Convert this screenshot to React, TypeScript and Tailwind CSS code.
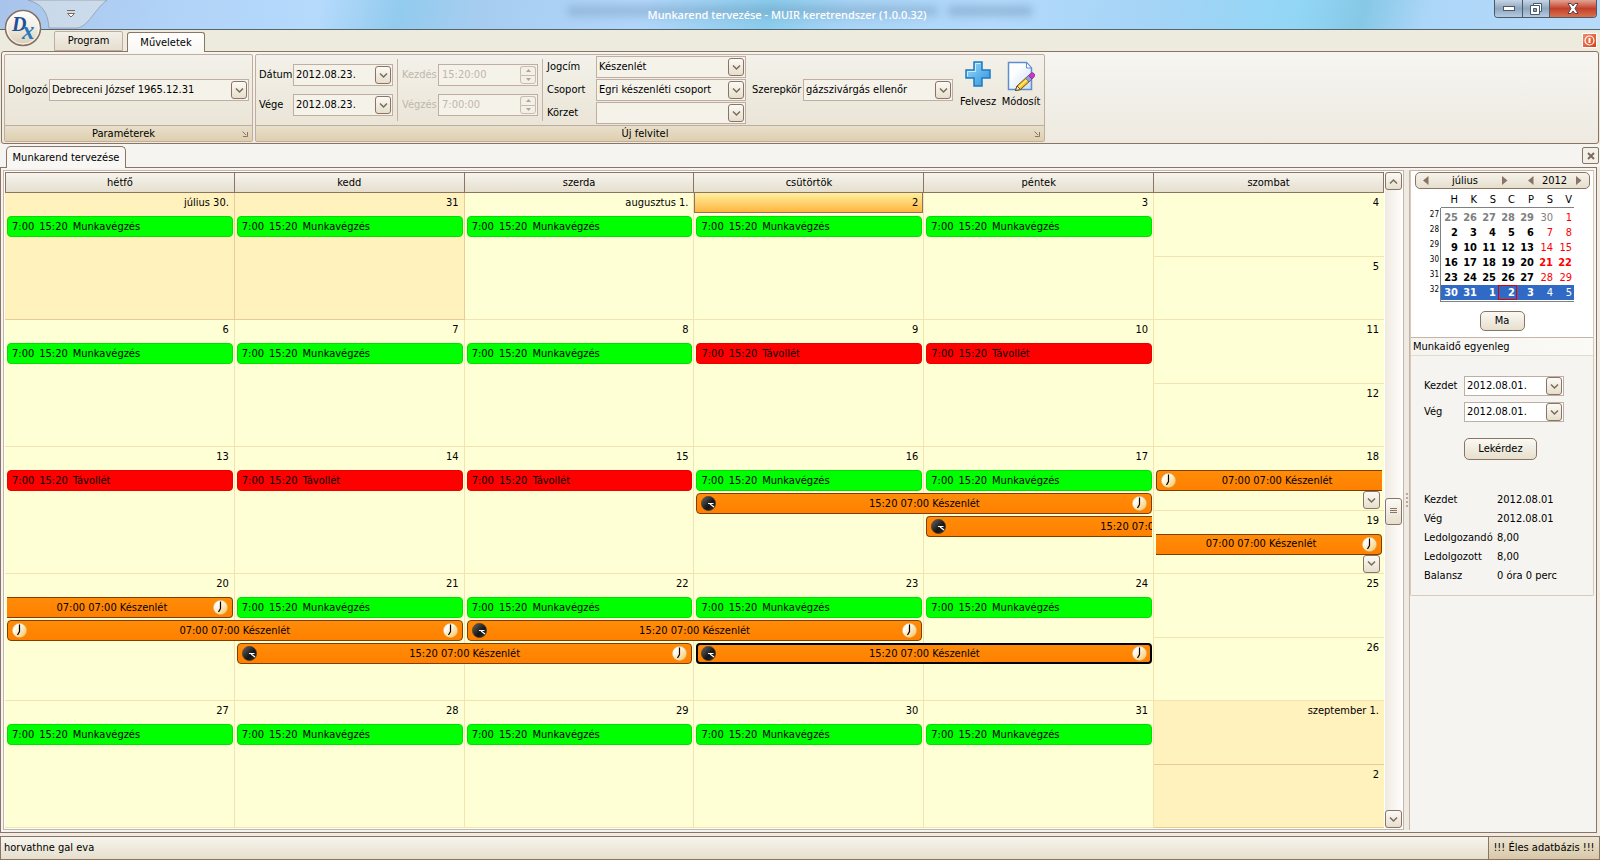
import type { ReactNode } from "react";
import clsx from "clsx";

type EventKind = "work" | "absence" | "duty";

type CalEvent = {
  kind: EventKind;
  place: string;
  start?: "day" | "night";
  end?: "day" | "night";
  openLeft?: boolean;
  openRight?: boolean;
  cut?: boolean;
  selected?: boolean;
  text: string;
};

type WeekendDay = { label: string; other?: boolean; event?: CalEvent };

type Week = {
  days: { label: string; other?: boolean; today?: boolean }[];
  weekend: WeekendDay[];
  events: CalEvent[];
};

const dayNames = ["hétfő", "kedd", "szerda", "csütörtök", "péntek", "szombat"];

const cols = [
  "col-start-1 row-start-2",
  "col-start-2 row-start-2",
  "col-start-3 row-start-2",
  "col-start-4 row-start-2",
  "col-start-5 row-start-2",
];

const work = (i: number): CalEvent => ({ kind: "work", place: cols[i], text: "Munkavégzés" });
const absence = (i: number): CalEvent => ({ kind: "absence", place: cols[i], text: "Távollét" });

const weeks: Week[] = [
  {
    days: [
      { label: "július 30.", other: true },
      { label: "31", other: true },
      { label: "augusztus 1." },
      { label: "2", today: true },
      { label: "3" },
    ],
    weekend: [{ label: "4" }, { label: "5" }],
    events: [work(0), work(1), work(2), work(3), work(4)],
  },
  {
    days: [{ label: "6" }, { label: "7" }, { label: "8" }, { label: "9" }, { label: "10" }],
    weekend: [{ label: "11" }, { label: "12" }],
    events: [work(0), work(1), work(2), absence(3), absence(4)],
  },
  {
    days: [{ label: "13" }, { label: "14" }, { label: "15" }, { label: "16" }, { label: "17" }],
    weekend: [
      { label: "18", event: { kind: "duty", place: "", start: "day", openRight: true, text: "07:00 07:00 Készenlét" } },
      { label: "19", event: { kind: "duty", place: "", end: "day", openLeft: true, text: "07:00 07:00 Készenlét" } },
    ],
    events: [
      absence(0),
      absence(1),
      absence(2),
      work(3),
      work(4),
      { kind: "duty", place: "col-start-4 col-span-2 row-start-3", start: "night", end: "day", text: "15:20 07:00 Készenlét" },
      { kind: "duty", place: "col-start-5 row-start-4", start: "night", openRight: true, cut: true, text: "15:20 07:00 Készenlét" },
    ],
  },
  {
    days: [{ label: "20" }, { label: "21" }, { label: "22" }, { label: "23" }, { label: "24" }],
    weekend: [{ label: "25" }, { label: "26" }],
    events: [
      { kind: "duty", place: "col-start-1 row-start-2", end: "day", openLeft: true, text: "07:00 07:00 Készenlét" },
      work(1),
      work(2),
      work(3),
      work(4),
      { kind: "duty", place: "col-start-1 col-span-2 row-start-3", start: "day", end: "day", text: "07:00 07:00 Készenlét" },
      { kind: "duty", place: "col-start-3 col-span-2 row-start-3", start: "night", end: "day", text: "15:20 07:00 Készenlét" },
      { kind: "duty", place: "col-start-2 col-span-2 row-start-4", start: "night", end: "day", text: "15:20 07:00 Készenlét" },
      { kind: "duty", place: "col-start-4 col-span-2 row-start-4", start: "night", end: "day", selected: true, text: "15:20 07:00 Készenlét" },
    ],
  },
  {
    days: [{ label: "27" }, { label: "28" }, { label: "29" }, { label: "30" }, { label: "31" }],
    weekend: [
      { label: "szeptember 1.", other: true },
      { label: "2", other: true },
    ],
    events: [work(0), work(1), work(2), work(3), work(4)],
  },
];

const miniWeeks = [
  { no: 27, days: [25, 26, 27, 28, 29, 30, 1] },
  { no: 28, days: [2, 3, 4, 5, 6, 7, 8] },
  { no: 29, days: [9, 10, 11, 12, 13, 14, 15] },
  { no: 30, days: [16, 17, 18, 19, 20, 21, 22] },
  { no: 31, days: [23, 24, 25, 26, 27, 28, 29] },
  { no: 32, days: [30, 31, 1, 2, 3, 4, 5] },
];

const balance = [
  ["Kezdet", "2012.08.01"],
  ["Vég", "2012.08.01"],
  ["Ledolgozandó", "8,00"],
  ["Ledolgozott", "8,00"],
  ["Balansz", "0 óra 0 perc"],
];

/* ── Icons ── */

function Chevron({ up }: { up?: boolean }) {
  return (
    <svg width="9" height="7" viewBox="0 0 9 7" fill="none" stroke="#7d6a5c" strokeWidth="1.5">
      <path d={up ? "M1 5.5 4.5 2 8 5.5" : "M1 1.5 4.5 5 8 1.5"} />
    </svg>
  );
}

function Triangle({ left }: { left?: boolean }) {
  return (
    <svg width="6" height="9" viewBox="0 0 6 9" fill="#8c7464">
      <path d={left ? "M5.5 0v9L0 4.500z" : "M0 0v9l5.500-4.500z"} />
    </svg>
  );
}

function Clock({ night }: { night?: boolean }) {
  return (
    <svg className="shrink-0" width="15" height="15" viewBox="0 0 15 15">
      <defs>
        <linearGradient id="clockDay" x1="0" y1="0" x2="1" y2="1">
          <stop offset="0.3" stopColor="#fffdf4" />
          <stop offset="1" stopColor="#f8c050" />
        </linearGradient>
        <linearGradient id="clockNight" x1="0" y1="0" x2="1" y2="1">
          <stop offset="0" stopColor="#6a6a6a" />
          <stop offset="0.6" stopColor="#141414" />
          <stop offset="1" stopColor="#3c3c3c" />
        </linearGradient>
      </defs>
      <circle cx="7.500" cy="7.500" r="7.200" fill={night ? "url(#clockNight)" : "url(#clockDay)"} stroke={night ? "#4a4038" : "#d9a04c"} strokeWidth="0.500" />
      {night ? (
        <path d="M7 7.500h5.500M9 8l4 3" stroke="#fff" strokeWidth="1.200" fill="none" />
      ) : (
        <path d="M7.500 1.500v7L5.500 12" stroke="#000" strokeWidth="1.200" fill="none" />
      )}
    </svg>
  );
}

function PlusIcon() {
  return (
    <svg width="26" height="26" viewBox="0 0 26 26">
      <defs>
        <linearGradient id="plusFill" x1="0" y1="0" x2="1" y2="1">
          <stop offset="0" stopColor="#9edcf8" />
          <stop offset="1" stopColor="#2a93e0" />
        </linearGradient>
      </defs>
      <path d="M9 1h8v8h8v8h-8v8H9v-8H1V9h8z" fill="url(#plusFill)" stroke="#2079c4" strokeWidth="1.500" />
      <path d="M10.500 2.500h5M10.500 2.500v8h-8v5" fill="none" stroke="#c8edfc" />
    </svg>
  );
}

function EditIcon() {
  return (
    <svg width="28" height="31" viewBox="0 0 28 31">
      <defs>
        <linearGradient id="pageFill" x1="0" y1="0" x2="1" y2="1">
          <stop offset="0.3" stopColor="#ffffff" />
          <stop offset="1" stopColor="#c9dbf4" />
        </linearGradient>
      </defs>
      <path d="M1.500 1.500h18l5 5.500v21.500h-23z" fill="url(#pageFill)" stroke="#5b8fd0" strokeWidth="1.500" />
      <path d="M19.500 1.500V7h5z" fill="#fff" stroke="#5b8fd0" />
      <path d="M8.500 29.500 10 25l11-10 3.500 3.500-11 10z" fill="#f9c11c" stroke="#6a5510" />
      <path d="M11.500 26.500 22 17" stroke="#fff0a0" strokeWidth="1.200" />
      <path d="m8.500 29.500 1.500-4.500 3.500 3.500z" fill="#fbe6c0" stroke="#4a3a18" strokeWidth="0.800" />
      <path d="m18.500 17.500 3-3 3.500 3.500-3 3z" fill="#9a9ad2" stroke="#5a5a90" strokeWidth="0.700" />
      <path d="m21.500 14.500 2-2a2 2 0 0 1 3.500 3.500l-2 2z" fill="#c23ad0" stroke="#7c1c88" strokeWidth="0.700" />
    </svg>
  );
}

function AppOrb() {
  return (
    <svg width="38" height="38" viewBox="0 0 38 38">
      <defs>
        <linearGradient id="orb" x1="0" y1="0" x2="0" y2="1">
          <stop offset="0" stopColor="#ffffff" />
          <stop offset="0.5" stopColor="#f1ece0" />
          <stop offset="1" stopColor="#d8cbb4" />
        </linearGradient>
      </defs>
      <circle cx="19" cy="19" r="17.500" fill="url(#orb)" stroke="#857062" strokeWidth="1.500" />
      <circle cx="19" cy="19" r="16" fill="none" stroke="#fff" strokeWidth="0.800" />
      <text x="8" y="22" fontFamily="Liberation Serif, serif" fontStyle="italic" fontWeight="bold" fontSize="20" fill="#1f4f96">
        D
      </text>
      <text x="18" y="30" fontFamily="Liberation Serif, serif" fontStyle="italic" fontWeight="bold" fontSize="25" fill="#2878be">
        x
      </text>
    </svg>
  );
}

/* ── Fields ── */

const arrowBox =
  "flex items-center justify-center w-4 h-[18px] rounded-[3px] border border-[#8c7464] bg-gradient-to-b from-[#fbfaf6] to-[#e6dfcd]";

function Combo({ id, value, className }: { id: string; value: string; className: string }) {
  return (
    <div className={clsx("grid items-center h-[22px] border border-[#beaea4] bg-[#f5f2ea]", className)}>
      <select id={id} defaultValue={value} className="col-start-1 row-start-1 w-full h-5 pl-[2px] appearance-none bg-transparent outline-none">
        <option>{value}</option>
      </select>
      <span className={clsx(arrowBox, "col-start-1 row-start-1 justify-self-end mr-px pointer-events-none")}>
        <Chevron />
      </span>
    </div>
  );
}

function DateField({ id, value, plain }: { id: string; value: string; plain?: boolean }) {
  return (
    <div className={clsx("flex items-center w-[100px] border border-[#beaea4]", plain ? "h-5 bg-white" : "h-[22px] bg-[#f5f2ea]")}>
      <input id={id} defaultValue={value} className="flex-1 min-w-0 pl-[2px] bg-transparent outline-none" />
      <button aria-label="Naptár" className={clsx(arrowBox, "mr-px", plain && "h-4")}>
        <Chevron />
      </button>
    </div>
  );
}

function TimeField({ id, value }: { id: string; value: string }) {
  const half = "flex flex-1 items-center justify-center border border-[#c8bcb0] bg-[#f3f0e8]";
  return (
    <div className="flex items-center w-[100px] h-[22px] border border-[#beaea4] bg-[#f5f2ea]">
      <input id={id} disabled defaultValue={value} className="flex-1 min-w-0 pl-[3px] bg-transparent text-[#c0b6ae]" />
      <div className="flex flex-col w-4 h-[18px] mr-px">
        <button disabled aria-label="Növel" className={clsx(half, "rounded-t-[3px] border-b-0")}>
          <svg width="5" height="3" viewBox="0 0 5 3" fill="#b0a398"><path d="M0 3 2.500 0 5 3z" /></svg>
        </button>
        <button disabled aria-label="Csökkent" className={clsx(half, "rounded-b-[3px]")}>
          <svg width="5" height="3" viewBox="0 0 5 3" fill="#b0a398"><path d="M0 0 2.500 3 5 0z" /></svg>
        </button>
      </div>
    </div>
  );
}

function RibbonGroup({ title, children }: { title: string; children: ReactNode }) {
  return (
    <section className="flex flex-col rounded-[2px] border border-[#bfaea0] bg-gradient-to-b from-[#f3f1ea] to-[#e8e2d2]">
      <div className="flex items-center h-[70px] px-[3px]">{children}</div>
      <div className="flex items-center h-4 border-t border-[#bfaea0] bg-gradient-to-b from-[#e8dfcb] to-[#dfcfae] pr-1">
        <h2 className="flex-1 text-center leading-none">{title}</h2>
        <svg width="6" height="6" viewBox="0 0 6 6" fill="none" stroke="#8c7464"><path d="M0.500 0.500 4 4M5.500 1v4.500H1" /></svg>
      </div>
    </section>
  );
}

function Divider() {
  return <span className="w-px h-[62px] mx-1 bg-[#c3b2a4]" />;
}

/* ── Calendar ── */

function EventBar({ event }: { event: CalEvent }) {
  const { kind, place, start, end, openLeft, openRight, cut, selected, text } = event;
  if (kind !== "duty") {
    return (
      <div
        className={clsx(
          "z-10 flex items-center gap-[5px] h-[21px] mx-[2px] pl-1 rounded-[4px] border whitespace-nowrap overflow-hidden",
          kind === "work" ? "bg-[#00ff00] border-[#00e000]" : "bg-[#ff0000] border-[#ea0000]",
          place
        )}
      >
        <span>7:00</span>
        <span>15:20</span>
        <span>{text}</span>
      </div>
    );
  }
  return (
    <div
      className={clsx(
        "z-10 flex items-center h-[21px] mx-[2px] bg-gradient-to-b from-[#ff8c08] to-[#ff8000] whitespace-nowrap overflow-hidden",
        selected ? "border-2 border-black px-[3px]" : "border border-[#803f00] px-1",
        openLeft ? "border-l-0" : "rounded-l-[4px]",
        openRight ? "border-r-0" : "rounded-r-[4px]",
        place
      )}
    >
      {start && <Clock night={start === "night"} />}
      <span className={clsx("text-center", cut ? "w-[193%] shrink-0" : "flex-1")}>{text}</span>
      {end && <Clock night={end === "night"} />}
    </div>
  );
}

function WeekRow({ week }: { week: Week }) {
  return (
    <div className="grid grid-cols-6 grid-rows-[23px_23px_23px_23px_1fr]">
      {week.days.map((day, i) => (
        <div
          key={day.label}
          className={clsx(
            "row-start-1 row-span-5 border-r border-b",
            day.other ? "bg-[#fff2bd] border-[#e9cb98]" : "bg-[#ffffd5] border-[#f4e3b2]",
            i === 0 && "col-start-1",
            i === 1 && "col-start-2",
            i === 2 && "col-start-3",
            i === 3 && "col-start-4",
            i === 4 && "col-start-5"
          )}
        >
          <div
            className={clsx(
              "flex items-center justify-end h-5",
              day.today
                ? "pr-1 border border-t-0 border-[#8c7464] bg-gradient-to-b from-[#fff09c] to-[#ffb53a]"
                : "pr-[5px]"
            )}
          >
            {day.label}
          </div>
        </div>
      ))}
      <div className="col-start-6 row-start-1 row-span-5 flex flex-col">
        {week.weekend.map((day) => (
          <div
            key={day.label}
            className={clsx(
              "flex flex-1 flex-col border-b",
              day.other ? "bg-[#fff2bd] border-[#e9cb98]" : "bg-[#ffffd5] border-[#f4e3b2]"
            )}
          >
            <div className="flex items-center justify-end h-5 mb-[3px] pr-[5px]">{day.label}</div>
            {day.event && (
              <>
                <EventBar event={day.event} />
                <button aria-label="További események" className={clsx(arrowBox, "h-[17px] w-[17px] self-end mr-1 to-[#d8c8a8]")}>
                  <Chevron />
                </button>
              </>
            )}
          </div>
        ))}
      </div>
      {week.events.map((event) => (
        <EventBar key={event.place} event={event} />
      ))}
    </div>
  );
}

function MiniCalendar() {
  return (
    <div className="flex flex-col items-center bg-white pt-px pb-1.5">
      <div className="flex items-center w-[175px] h-[17px] px-[7px] rounded-[5px] border border-[#8c7464] bg-gradient-to-b from-[#f6f3ec] to-[#e6dfcd]">
        <button aria-label="Előző hónap"><Triangle left /></button>
        <span className="flex-1 text-center">július</span>
        <button aria-label="Következő hónap"><Triangle /></button>
        <button aria-label="Előző év" className="ml-5"><Triangle left /></button>
        <span className="w-[42px] text-center">2012</span>
        <button aria-label="Következő év"><Triangle /></button>
      </div>
      <table className="self-start ml-[11px] mt-[2px] border-separate border-spacing-0 text-right leading-[15px]">
        <thead>
          <tr>
            <th />
            {["H", "K", "S", "C", "P", "S", "V"].map((d, i) => (
              <th key={i} className="w-[19px] h-[17px] p-0 pr-[2px] border-b border-[#808080] font-normal text-right">
                {d}
              </th>
            ))}
          </tr>
        </thead>
        <tbody>
          <tr>
            <th className="h-[2px] p-0 border-r border-[#808080]" />
            <td colSpan={7} className="h-[2px] p-0" />
          </tr>
          {miniWeeks.map((week, row) => (
            <tr key={week.no}>
              <th className="w-[19px] p-0 pr-px border-r border-[#808080] text-[8px] leading-[9px] font-normal align-top text-right">{week.no}</th>
              {week.days.map((day, i) => {
                const weekend = i > 4;
                const busy = !weekend || row === 3;
                return (
                  <td
                    key={i}
                    className={clsx(
                      "w-[19px] h-[15px] p-0 pr-[2px]",
                      busy && "font-bold",
                      row === 5 && "bg-[#316ac5] text-white",
                      row === 5 && i === 3 && "outline outline-1 -outline-offset-1 outline-[#e00000]",
                      row === 0 && i < 6 && "text-[#808080]",
                      weekend && row < 5 && !(row === 0 && i === 5) && "text-[#ff0000]"
                    )}
                  >
                    {day}
                  </td>
                );
              })}
            </tr>
          ))}
          <tr>
            <th className="h-[2px] p-0 border-r border-[#808080]" />
            <td colSpan={7} className="h-[2px] p-0 border-b border-[#808080]" />
          </tr>
        </tbody>
      </table>
      <button className="w-[45px] h-5 mt-[9px] rounded-[5px] border border-[#8c7464] bg-gradient-to-b from-[#faf9f4] to-[#e6dfcd]">Ma</button>
    </div>
  );
}

function SidePanel() {
  return (
    <aside className="w-[184px] shrink-0">
      <div className="border border-t-[#c5b5a8] border-[#d6cbb8] rounded-b-[2px]">
        <MiniCalendar />
        <h2 className="h-[19px] pl-[2px] border-t border-b border-t-[#c5b5a8] border-b-[#e4dccb] bg-gradient-to-r from-[#f5f4f0] to-[#fbfaf7] leading-[17px]">
          Munkaidő egyenleg
        </h2>
        <div className="px-[13px] pt-5 pb-[10px]">
          <div className="grid grid-cols-[40px_100px] items-center gap-y-1.5">
            <label htmlFor="from">Kezdet</label>
            <DateField id="from" value="2012.08.01." plain />
            <label htmlFor="to">Vég</label>
            <DateField id="to" value="2012.08.01." plain />
          </div>
          <button className="block w-[73px] h-[22px] ml-10 mt-4 rounded-[5px] border border-[#8c7464] bg-gradient-to-b from-[#faf9f4] to-[#e6dfcd]">
            Lekérdez
          </button>
          <dl className="grid grid-cols-[73px_1fr] mt-[30px] leading-[19px]">
            {balance.map(([name, value]) => (
              <div key={name} className="contents">
                <dt className="whitespace-nowrap">{name}</dt>
                <dd>{value}</dd>
              </div>
            ))}
          </dl>
        </div>
      </div>
    </aside>
  );
}

function ScrollBar() {
  return (
    <div className="flex flex-col w-[17px] shrink-0 ml-px bg-gradient-to-r from-[#efeae0] to-[#fffefc]">
      <button aria-label="Fel" className={clsx(arrowBox, "w-[17px] h-[17px]")}><Chevron up /></button>
      <span className="grow-[309] basis-0" />
      <span className={clsx(arrowBox, "w-[17px] h-[27px] shrink-0")}>
        <svg width="7" height="7" viewBox="0 0 7 7" stroke="#8c7464"><path d="M0 0.500h7M0 2.500h7M0 4.500h7" /></svg>
      </span>
      <span className="grow-[286] basis-0" />
      <button aria-label="Le" className={clsx(arrowBox, "w-[17px] h-[17px]")}><Chevron /></button>
    </div>
  );
}

function TitleBar() {
  return (
    <header className="relative flex items-center h-[30px] border-b border-[#56646e] bg-[linear-gradient(105deg,#a9c4ea_0%,#b0d2f6_10%,#b5dafc_20%,#92cbee_25%,#a6cdf0_30%,#b2d6fa_40%,#8accec_48%,#a8d4f6_53%,#b4dafc_62%,#a4d4f6_72%,#92d6f6_81%,#86c8e6_85%,#acd6f8_89%,#b8dafa_100%)]">
      <svg className="absolute left-[28px] top-0" width="80" height="29" viewBox="0 0 80 29">
        <path d="M0 0c14 4 20 12 21 28h28C60 27 66 10 79 0z" fill="#dfe4e8" fillOpacity="0.6" stroke="#8f9aa6" strokeWidth="0.800" />
        <path d="M39 10.500h8M39.500 13.500l3.500 3.500 3.500-3.500z" fill="#fff" stroke="#7d6a5c" />
      </svg>
      <div className="absolute left-[568px] top-[6px] w-[370px] h-2.5 bg-[#4f7696]/30 blur-[4px]" />
      <div className="absolute left-[948px] top-[6px] w-[84px] h-2.5 bg-[#4f7696]/35 blur-[4px]" />
      <h1 className="relative flex-1 pl-20 text-center font-['Noto_Sans',sans-serif] text-[11px] font-medium text-white">
        Munkarend tervezése - MUIR keretrendszer (1.0.0.32)
      </h1>
      <div className="relative flex self-start h-[18px] mr-[3px] rounded-b-[4px] border border-t-0 border-[#4b5a68] overflow-hidden">
        <button aria-label="Kis méret" className="flex items-center justify-center w-7 border-r border-[#4b5a68] bg-gradient-to-b from-[#c6d5e6] via-[#8fa6bf] to-[#b4cbe2]">
          <svg width="12" height="5" viewBox="0 0 12 5"><rect x="0.500" y="0.500" width="11" height="4" fill="#fff" stroke="#4b5a68" /></svg>
        </button>
        <button aria-label="Előző méret" className="flex items-center justify-center w-[27px] border-r border-[#4b5a68] bg-gradient-to-b from-[#c6d5e6] via-[#8fa6bf] to-[#b4cbe2]">
          <svg width="12" height="12" viewBox="0 0 12 12" fill="#fff" stroke="#4b5a68"><path d="M3.500 0.500h8v8h-8z" /><path d="M0.500 2.500h9v9h-9z" /><path d="M3.500 5.500h3v3h-3z" fill="#8fa6bf" /></svg>
        </button>
        <button aria-label="Bezárás" className="flex items-center justify-center w-[46px] bg-gradient-to-b from-[#e2a294] via-[#c2402a] to-[#d8704f]">
          <svg width="12" height="11" viewBox="0 0 12 11"><path d="M1 0.500h3L6 3l2-2.500h3L8 5.500l3 5H8L6 8l-2 2.500H1l3-5z" fill="#fff" stroke="#5a4048" /></svg>
        </button>
      </div>
    </header>
  );
}

function Ribbon() {
  return (
    <div className="relative bg-[#edeade]">
      <button aria-label="Alkalmazás menü" className="absolute left-1 -top-[21px] z-20"><AppOrb /></button>
      <nav className="flex items-end h-[21px] pl-[54px] pr-[3px]">
        <button className="w-[69px] h-5 mr-1 rounded-t-[2px] border border-[#bfaea0] bg-gradient-to-b from-[#f2efe7] to-[#e6dfcf]">Program</button>
        <button className="relative z-10 w-[78px] h-5 -mb-px rounded-t-[3px] border border-b-0 border-[#8c7464] bg-gradient-to-b from-white to-[#f8f7f3]">Műveletek</button>
        <button aria-label="Kilépés" className="flex items-center justify-center size-[15px] ml-auto mb-[3px] border border-white bg-gradient-to-br from-[#f08a64] to-[#d83a14]">
          <svg width="11" height="11" viewBox="0 0 11 11" fill="none" stroke="#fff" strokeWidth="1.200"><circle cx="5.500" cy="5.500" r="4.500" /><path d="M5.500 3v5" strokeWidth="2" /></svg>
        </button>
      </nav>
      <div className="flex items-start gap-[2px] h-[93px] mx-px p-[2px] rounded-[3px] border border-[#8c7464] bg-gradient-to-b from-[#f6f5f1] to-[#eeeae1]">
        <RibbonGroup title="Paraméterek">
          <label htmlFor="worker" className="w-[41px]">Dolgozó</label>
          <Combo id="worker" value="Debreceni József 1965.12.31" className="w-[200px]" />
        </RibbonGroup>
        <RibbonGroup title="Új felvitel">
          <div className="grid grid-cols-[34px_100px] items-center gap-y-2">
            <label htmlFor="date">Dátum</label>
            <DateField id="date" value="2012.08.23." />
            <label htmlFor="until">Vége</label>
            <DateField id="until" value="2012.08.23." />
          </div>
          <Divider />
          <div className="grid grid-cols-[36px_100px] items-center gap-y-2">
            <label htmlFor="start" className="text-[#c0b6ae]">Kezdés</label>
            <TimeField id="start" value="15:20:00" />
            <label htmlFor="end" className="text-[#c0b6ae]">Végzés</label>
            <TimeField id="end" value="7:00:00" />
          </div>
          <Divider />
          <div className="grid grid-cols-[49px_150px] items-center gap-y-px">
            <label htmlFor="title">Jogcím</label>
            <Combo id="title" value="Készenlét" className="w-full" />
            <label htmlFor="group">Csoport</label>
            <Combo id="group" value="Egri készenléti csoport" className="w-full" />
            <label htmlFor="area">Körzet</label>
            <Combo id="area" value="" className="w-full" />
          </div>
          <label htmlFor="role" className="w-[51px] ml-1.5">Szerepkör</label>
          <Combo id="role" value="gázszivárgás ellenőr" className="w-[150px]" />
          <button className="flex flex-col items-center justify-between self-start w-9 h-12 mt-[6px] ml-[7px] whitespace-nowrap">
            <PlusIcon />
            Felvesz
          </button>
          <button className="flex flex-col items-center justify-between self-start w-10 h-12 mt-[6px] ml-[5px] whitespace-nowrap">
            <EditIcon />
            Módosít
          </button>
        </RibbonGroup>
      </div>
    </div>
  );
}

export default function App() {
  return (
    <div className="flex flex-col min-h-screen bg-[#f0ece4] font-['DejaVu_Sans_Condensed','Liberation_Sans',sans-serif] text-[11px] leading-[14px] text-black">
      <TitleBar />
      <Ribbon />

      <div className="flex items-end justify-between h-[23px] pl-1.5 pr-px bg-[#f5f4f0]">
        <button className="relative z-10 w-[120px] h-[22px] -mb-px rounded-t-[5px] border border-b-0 border-[#8c7464] bg-[#f8f7f4]">
          Munkarend tervezése
        </button>
        <button aria-label="Lap bezárása" className="flex items-center justify-center size-[17px] mb-[3px] rounded-[2px] border border-[#8c7464] bg-[#f3f0e8]">
          <svg width="8" height="8" viewBox="0 0 8 8" stroke="#7d6a5c" strokeWidth="2"><path d="m1 1 6 6M7 1 1 7" /></svg>
        </button>
      </div>

      <main className="flex flex-1 mr-[3px] p-[2px] border border-[#8c7464] bg-[#f5f4f0]">
        <div className="flex flex-1 min-w-0 p-px border border-[#c5b5a8] bg-white">
          <div className="flex flex-col flex-1 min-w-0">
            <div className="grid grid-cols-6 h-[21px] border-y border-[#8c7464] bg-gradient-to-b from-[#f6f4ee] to-[#e6dfcf]">
              {dayNames.map((name) => (
                <div key={name} className="flex items-center justify-center border-r border-[#8c7464] first:border-l">{name}</div>
              ))}
            </div>
            <div className="grid flex-1 grid-rows-5">
              {weeks.map((week) => (
                <WeekRow key={week.days[0].label} week={week} />
              ))}
            </div>
          </div>
          <ScrollBar />
        </div>
        <div className="flex items-center justify-center w-1.5 shrink-0 border-r border-[#c5b5a8] bg-[#f0ebe2]">
          <svg width="2" height="14" viewBox="0 0 2 14" fill="#b8aa9a"><path d="M0 0h2v2H0zM0 4h2v2H0zM0 8h2v2H0zM0 12h2v2H0z" /></svg>
        </div>
        <SidePanel />
      </main>

      <footer className="flex h-6 mt-[3px] border border-[#8c7464] bg-gradient-to-b from-[#f6f4ee] to-[#e6dfcd] leading-[22px]">
        <span className="flex-1 pl-[3px]">horvathne gal eva</span>
        <span className="w-[111px] border-l border-[#8c7464] bg-gradient-to-b from-[#ece4d2] to-[#d8c8a8] text-center">!!! Éles adatbázis !!!</span>
      </footer>
    </div>
  );
}
